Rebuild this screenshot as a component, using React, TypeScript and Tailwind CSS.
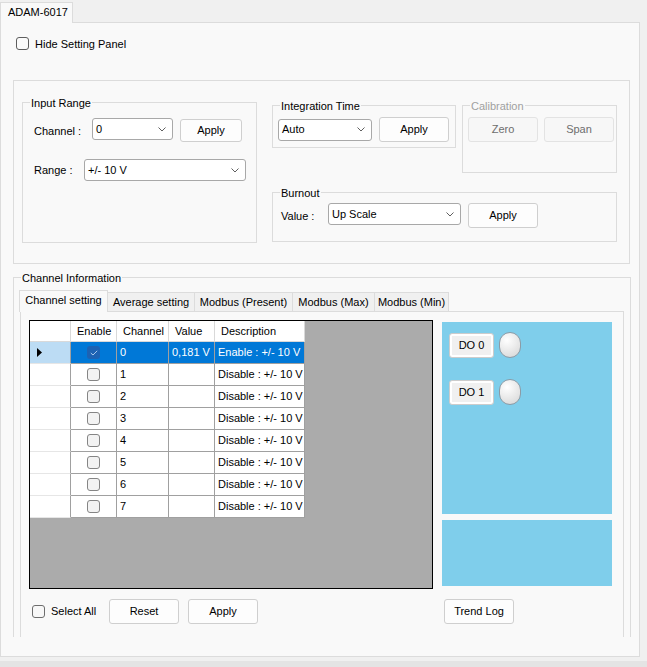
import type { ReactNode } from "react";

const LINE = "border-[#dcdcdc]";

function Chevron() {
  return (
    <svg width="8" height="5" viewBox="0 0 8 5" aria-hidden>
      <path d="M0.5 0.5 L4 4 L7.5 0.5" fill="none" stroke="#5f5f5f" strokeWidth="1" />
    </svg>
  );
}

function Group({
  label,
  className,
  muted,
  children,
}: {
  label: string;
  className: string;
  muted?: boolean;
  children?: ReactNode;
}) {
  return (
    <div className={`relative border ${LINE} ${className}`}>
      <span
        className={`absolute left-[7px] top-[-6px] bg-[#f9f9f9] px-[1px] leading-[13px] ${
          muted ? "text-[#a0a0a0]" : "text-black"
        }`}
      >
        {label}
      </span>
      {children}
    </div>
  );
}

function Select({ value, className }: { value: string; className: string }) {
  return (
    <div
      className={`flex h-[22px] items-center justify-between rounded-[3px] border border-[#a8a8a8] bg-white pl-[3px] pr-[6px] ${className}`}
    >
      <span>{value}</span>
      <Chevron />
    </div>
  );
}

function Button({
  children,
  className,
  disabled,
}: {
  children: ReactNode;
  className: string;
  disabled?: boolean;
}) {
  return (
    <div
      className={`flex items-center justify-center rounded-[3px] border ${
        disabled
          ? "border-[#e3e3e3] bg-[#f7f7f7] text-[#6e6e6e]"
          : "border-[#cfcfcf] bg-[#fdfdfd] text-black"
      } ${className}`}
    >
      {children}
    </div>
  );
}

function Check({ checked }: { checked?: boolean }) {
  if (checked) {
    return (
      <div className="flex h-[13px] w-[13px] items-center justify-center rounded-[3px] bg-[#1d62b3]">
        <svg width="8" height="6" viewBox="0 0 8 6" aria-hidden>
          <path d="M0.8 3 L3 5 L7.2 0.8" fill="none" stroke="#a9c8ec" strokeWidth="1" />
        </svg>
      </div>
    );
  }
  return <div className="h-[13px] w-[13px] rounded-[3px] border border-[#858585] bg-[#f3f3f3]" />;
}

const COLS = ["w-[41px]", "w-[46px]", "w-[52px]", "w-[46px]", "w-[90px]"];

const rows = Array.from({ length: 8 }, (_, i) => ({
  ch: String(i),
  value: i === 0 ? "0,181 V" : "",
  desc: i === 0 ? "Enable : +/- 10 V" : "Disable : +/- 10 V",
  selected: i === 0,
}));

function DataGrid() {
  return (
    <div className="h-[269px] w-[404px] border border-black bg-[#ababab]">
      <div className="flex">
        <div className={`${COLS[0]} h-[21px] border-b border-r border-[#d9d9d9] bg-white`} />
        {["Enable", "Channel", "Value", "Description"].map((h, i) => (
          <div
            key={h}
            className={`${COLS[i + 1]} flex h-[21px] items-center border-b border-r border-[#d9d9d9] bg-white pl-[6px]`}
          >
            {h}
          </div>
        ))}
      </div>
      {rows.map((r) => (
        <div key={r.ch} className="flex">
          <div
            className={`${COLS[0]} flex h-[22px] items-center border-b border-r border-b-[#e6e6e6] border-r-[#a0a0a0] pl-[7px] ${
              r.selected ? "bg-[#bcdcf4]" : "bg-white"
            }`}
          >
            {r.selected && (
              <svg width="5" height="9" viewBox="0 0 5 9" aria-hidden>
                <polygon points="0,0 5,4.5 0,9" fill="#000" />
              </svg>
            )}
          </div>
          <div
            className={`${COLS[1]} flex h-[22px] items-center justify-center border-b border-r border-[#a0a0a0] ${
              r.selected ? "bg-[#0078d7]" : "bg-white"
            }`}
          >
            <Check checked={r.selected} />
          </div>
          {[r.ch, r.value, r.desc].map((t, j) => (
            <div
              key={j}
              className={`${COLS[j + 2]} flex h-[22px] items-center whitespace-nowrap border-b border-r border-[#a0a0a0] pl-[3px] ${
                r.selected ? "bg-[#0078d7] text-white" : "bg-white text-black"
              }`}
            >
              {t}
            </div>
          ))}
        </div>
      ))}
    </div>
  );
}

function DoButton({ label }: { label: string }) {
  return (
    <div className="flex items-center gap-[5px]">
      <div className="flex h-[25px] w-[45px] items-center justify-center rounded-[3px] border border-[#cccccc] bg-[#f0f0f0] shadow-[inset_0_0_0_2px_#ffffff]">
        {label}
      </div>
      <div className="h-[26px] w-[22px] rounded-full border border-[#8c9ba6] bg-[radial-gradient(circle_at_35%_30%,#ffffff,#d4d4d4)]" />
    </div>
  );
}

const TABS = [
  { label: "Channel setting", w: "w-[89px]" },
  { label: "Average setting", w: "w-[87px]" },
  { label: "Modbus (Present)", w: "w-[98px]" },
  { label: "Modbus (Max)", w: "w-[82px]" },
  { label: "Modbus (Min)", w: "w-[74px]" },
];

export default function App() {
  return (
    <div className="flex h-[667px] w-[647px] flex-col overflow-hidden bg-[#f0f0f0] font-['Liberation_Sans',Arial,sans-serif] text-[11px] leading-[13px] text-black">
      {/* device tab */}
      <div className="flex h-[22px] items-end">
        <div
          className={`relative z-10 -mb-px flex h-[21px] w-[73px] items-center border-l border-r border-t ${LINE} bg-[#f9f9f9] pb-[2px] pl-[7px]`}
        >
          ADAM-6017
        </div>
      </div>

      <div className={`h-[635px] w-[640px] border ${LINE} bg-[#f9f9f9]`}>
        <div className="h-[614px] overflow-hidden">
          <div className="ml-[15px] mt-[14px] flex h-[13px] items-center gap-[6px]">
            <div className="h-[13px] w-[13px] rounded-[3px] border border-[#5e5e5e] bg-[#fbfbfb]" />
            <span className="mt-px">Hide Setting Panel</span>
          </div>

          {/* setting panel */}
          <div className={`ml-[12px] mt-[30px] flex h-[184px] w-[617px] items-start border ${LINE}`}>
            <Group label="Input Range" className="ml-[8px] mt-[21px] h-[141px] w-[235px] pl-[11px] pt-[15px]">
              <div className="flex items-start">
                <span className="mt-[7px] w-[58px]">Channel :</span>
                <Select value="0" className="w-[81px]" />
                <Button className="ml-[7px] mt-px h-[23px] w-[62px]">Apply</Button>
              </div>
              <div className="mt-[17px] flex items-start">
                <span className="mt-[5px] w-[50px]">Range :</span>
                <Select value="+/- 10 V" className="w-[162px]" />
              </div>
            </Group>

            <div className="ml-[15px] mt-[24px]">
              <div className="flex items-start">
                <Group label="Integration Time" className="h-[43px] w-[184px] pl-[5px] pt-[11px]">
                  <div className="flex items-center">
                    <Select value="Auto" className="w-[94px]" />
                    <Button className="ml-[7px] h-[25px] w-[70px]">Apply</Button>
                  </div>
                </Group>
                <Group label="Calibration" muted className="ml-[6px] h-[68px] w-[155px] pl-[5px] pt-[11px]">
                  <div className="flex gap-[6px]">
                    <Button disabled className="h-[25px] w-[70px]">Zero</Button>
                    <Button disabled className="h-[25px] w-[70px]">Span</Button>
                  </div>
                </Group>
              </div>
              <Group label="Burnout" className="mt-[19px] h-[50px] w-[345px] pl-[8px] pt-[10px]">
                <div className="flex items-start">
                  <span className="mt-[7px] w-[47px]">Value :</span>
                  <Select value="Up Scale" className="w-[133px]" />
                  <Button className="ml-[7px] h-[25px] w-[70px]">Apply</Button>
                </div>
              </Group>
            </div>
          </div>

          {/* channel information */}
          <Group label="Channel Information" className="ml-[12px] mt-[13px] h-[420px] w-[618px] pl-[5px] pt-[12px]">
            <div className="relative z-10 -mb-px flex h-[22px] items-end">
              {TABS.map((t, i) =>
                i === 0 ? (
                  <div
                    key={t.label}
                    className={`flex h-[22px] ${t.w} items-center justify-center border-l border-r border-t ${LINE} bg-[#f9f9f9] pb-[3px]`}
                  >
                    {t.label}
                  </div>
                ) : (
                  <div
                    key={t.label}
                    className={`mb-px flex h-[19px] ${t.w} items-center justify-center border-r border-t ${LINE} bg-[#f0f0f0]`}
                  >
                    {t.label}
                  </div>
                ),
              )}
            </div>
            <div className={`ml-px flex h-[380px] w-[604px] items-start border ${LINE}`}>
              <div className="ml-[8px] mt-[8px]">
                <DataGrid />
                <div className="mt-[10px] flex items-center">
                  <div className="ml-[3px] flex w-[77px] items-center gap-[6px]">
                    <div className="h-[13px] w-[13px] rounded-[3px] border border-[#6e6e6e] bg-[#f8f8f8]" />
                    <span>Select All</span>
                  </div>
                  <Button className="h-[25px] w-[70px]">Reset</Button>
                  <Button className="ml-[9px] h-[25px] w-[70px]">Apply</Button>
                </div>
              </div>
              <div className="ml-[9px] mt-[10px]">
                <div className="flex h-[192px] w-[170px] flex-col gap-[21px] bg-[#7fceeb] pl-[7px] pt-[10px]">
                  <DoButton label="DO 0" />
                  <DoButton label="DO 1" />
                </div>
                <div className="mt-[6px] h-[66px] w-[170px] bg-[#7fceeb]" />
                <Button className="ml-[2px] mt-[13px] h-[25px] w-[70px]">Trend Log</Button>
              </div>
            </div>
          </Group>
        </div>
      </div>
      <div className="mt-[4px] h-[6px] bg-[#e4e4e4]" />
    </div>
  );
}
